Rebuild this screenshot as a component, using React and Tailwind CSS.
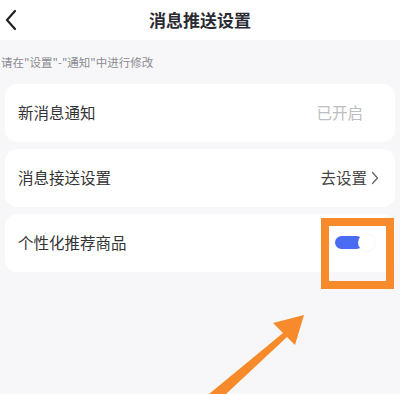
import React from 'react';

const font = { fontFamily: '"Noto Sans CJK SC", "Noto Sans", sans-serif' };

const Row = ({ label, children }) => (
  <div className="h-[58px] bg-white rounded-[12px] flex items-center justify-between pl-[13px]">
    <span className="text-[15.5px] text-[#333]">{label}</span>
    {children}
  </div>
);

const App = () => {
  return (
    <div className="w-[400px] h-[394px] bg-[#f7f7f9] overflow-hidden relative" style={font}>
      <div className="h-[40px] bg-white flex items-center relative">
        <svg className="absolute left-[4px] top-[9px]" width="14" height="22" viewBox="0 0 14 22">
          <path d="M11 2 L3 11 L11 20" fill="none" stroke="#222" strokeWidth="2.2" strokeLinecap="round" strokeLinejoin="round" />
        </svg>
        <h1 className="w-full text-center text-[17px] font-bold text-[#2a2a33]">消息推送设置</h1>
      </div>

      <p className="pl-[1px] pt-[12px] text-[11.5px] text-[#8a8a90] leading-[20px]">请在"设置"-"通知"中进行修改</p>

      <div className="mt-[12px] mx-[5px] flex flex-col gap-[7px]">
        <Row label="新消息通知">
          <span className="text-[15.5px] text-[#bdbdc2] pr-[32px]">已开启</span>
        </Row>
        <Row label="消息接送设置">
          <span className="flex items-center gap-[4px] text-[15.5px] text-[#444] pr-[16px]">
            去设置
            <svg width="8" height="14" viewBox="0 0 8 14">
              <path d="M1.5 1.5 L6.5 7 L1.5 12.5" fill="none" stroke="#666" strokeWidth="1.3" strokeLinecap="round" strokeLinejoin="round" />
            </svg>
          </span>
        </Row>
        <Row label="个性化推荐商品">
          <span className="relative w-[42px] h-[16px] mr-[18px]">
            <span className="absolute left-0 top-[1px] w-[28px] h-[13px] rounded-full bg-[#4a6cf3]" />
            <span className="absolute left-[23px] top-[-1px] w-[17px] h-[17px] rounded-full bg-white shadow-[0_0_2px_rgba(0,0,0,0.1)]" />
          </span>
        </Row>
      </div>

      {/* highlight box */}
      <div className="absolute left-[321px] top-[218px] w-[73px] h-[71px] border-[8px] border-[#f78a2a]" />

      {/* arrow */}
      <svg className="absolute left-0 top-0" width="400" height="394" viewBox="0 0 400 394">
        <path d="M209 394 L283 333 L273 323 L304 315 L295 345 L287 337 L226 394 Z" fill="#f78a2a" />
      </svg>
    </div>
  );
};

export default App;
